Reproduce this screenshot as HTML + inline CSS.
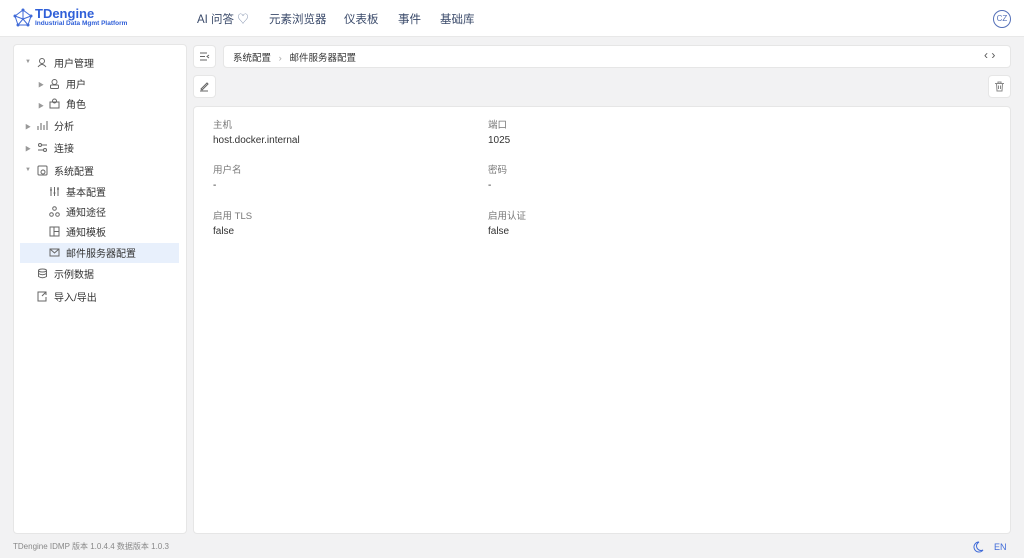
<!DOCTYPE html>
<html><head><meta charset="utf-8"><style>
*{box-sizing:border-box;margin:0;padding:0}
body{width:1024px;height:558px;background:#f2f2f3;font-family:"Liberation Sans","Noto Sans CJK SC",sans-serif;font-size:10px;color:#333;position:relative;overflow:hidden}
.abs{position:absolute}
.hdr{left:0;top:0;width:1024px;height:37px;background:#fff;border-bottom:1px solid #e8e8e8}
.nav{top:11px;font-size:11.5px;color:#3a4a6a}
.card{background:#fff;border-radius:4px;border:1px solid #e6e6e6}
.mi{position:absolute;font-size:10px;color:#333;display:flex;align-items:center}
.mi svg{margin-right:6px}
.lbl{font-size:9.5px;color:#777}
.val{font-size:10px;color:#333}
.arr{position:absolute;font-size:6px;color:#999}
</style></head><body>
<div class="abs hdr"></div>
<svg class="abs" style="left:12px;top:8px" width="22" height="20" viewBox="0 0 22 20"><g stroke="#3f6ad8" stroke-width="1" fill="none"><polygon points="11,2 19,8 16,17 6,17 3,8"/><path d="M11,2 L11,11 M19,8 L11,11 M16,17 L11,11 M6,17 L11,11 M3,8 L11,11"/></g><g fill="#3f6ad8"><circle cx="11" cy="2" r="1.5"/><circle cx="19" cy="8" r="1.5"/><circle cx="16" cy="17" r="1.5"/><circle cx="6" cy="17" r="1.5"/><circle cx="3" cy="8" r="1.5"/></g></svg>
<div class="abs" style="left:35px;top:6px;font-size:13px;font-weight:bold;color:#2f5fd8">TDengine</div>
<div class="abs" style="left:35px;top:20px;font-size:6.5px;font-weight:bold;color:#2f5fd8">Industrial Data Mgmt Platform</div>
<div class="abs nav" style="left:197px">AI 问答 <span style="color:#7a8aa8">♡</span></div>
<div class="abs nav" style="left:269px">元素浏览器</div>
<div class="abs nav" style="left:344px">仪表板</div>
<div class="abs nav" style="left:398px">事件</div>
<div class="abs nav" style="left:440px">基础库</div>
<div class="abs" style="left:993px;top:10px;width:18px;height:18px;border:1px solid #5470b8;border-radius:50%;font-size:8px;color:#5470b8;text-align:center;line-height:16px">CZ</div>

<div class="abs card" style="left:13px;top:44px;width:174px;height:490px"></div>
<div class="abs" style="left:20px;top:243px;width:159px;height:20px;background:#e8f0fc"></div>
<span class="arr" style="left:25px;top:59px">▼</span>
<div class="mi" style="left:37px;top:55px"><svg width="11" height="11"><circle cx="5" cy="4" r="2.5" fill="none" stroke="#666"/><path d="M1 10 Q5 5 9 10" fill="none" stroke="#666"/></svg>用户管理</div>
<span class="arr" style="left:38px;top:80px">▶</span>
<div class="mi" style="left:49px;top:76px"><svg width="11" height="11"><circle cx="5.5" cy="4" r="2.5" fill="none" stroke="#666"/><rect x="1.5" y="7" width="8" height="3.5" rx="1" fill="none" stroke="#666"/></svg>用户</div>
<span class="arr" style="left:38px;top:101px">▶</span>
<div class="mi" style="left:49px;top:96px"><svg width="11" height="11"><rect x="1" y="4" width="9" height="6" fill="none" stroke="#666"/><circle cx="5.5" cy="3" r="2" fill="none" stroke="#666"/></svg>角色</div>
<span class="arr" style="left:25px;top:122px">▶</span>
<div class="mi" style="left:37px;top:118px"><svg width="11" height="11"><path d="M1 10V6M4 10V3M7 10V5M10 10V1" stroke="#666"/></svg>分析</div>
<span class="arr" style="left:25px;top:144px">▶</span>
<div class="mi" style="left:37px;top:140px"><svg width="11" height="11"><path d="M1 3H10M1 8H10" stroke="#666"/><circle cx="3" cy="3" r="1.5" fill="#fff" stroke="#666"/><circle cx="8" cy="8" r="1.5" fill="#fff" stroke="#666"/></svg>连接</div>
<span class="arr" style="left:25px;top:167px">▼</span>
<div class="mi" style="left:37px;top:163px"><svg width="11" height="11"><rect x="1" y="1" width="9" height="9" rx="1" fill="none" stroke="#666"/><circle cx="6" cy="7" r="2" fill="none" stroke="#666"/></svg>系统配置</div>
<div class="mi" style="left:49px;top:184px"><svg width="11" height="11"><path d="M2 1V10M5.5 1V10M9 1V10M1 4H3M4.5 7H6.5M8 3H10" stroke="#666"/></svg>基本配置</div>
<div class="mi" style="left:49px;top:204px"><svg width="11" height="11"><circle cx="5.5" cy="2.5" r="1.8" fill="none" stroke="#666"/><circle cx="2.5" cy="8.5" r="1.8" fill="none" stroke="#666"/><circle cx="8.5" cy="8.5" r="1.8" fill="none" stroke="#666"/></svg>通知途径</div>
<div class="mi" style="left:49px;top:224px"><svg width="11" height="11"><rect x="1" y="1" width="9" height="9" fill="none" stroke="#666"/><path d="M5 1V10M5 5.5H10" stroke="#666"/></svg>通知模板</div>
<div class="mi" style="left:49px;top:245px"><svg width="11" height="11"><rect x="1" y="2" width="9" height="7" fill="none" stroke="#666"/><path d="M1 2L5.5 6L10 2" fill="none" stroke="#666"/></svg>邮件服务器配置</div>
<div class="mi" style="left:37px;top:266px"><svg width="11" height="11"><ellipse cx="5.5" cy="2.5" rx="4" ry="1.5" fill="none" stroke="#666"/><path d="M1.5 2.5V8.5Q5.5 11 9.5 8.5V2.5M1.5 5.5Q5.5 8 9.5 5.5" fill="none" stroke="#666"/></svg>示例数据</div>
<div class="mi" style="left:37px;top:289px"><svg width="11" height="11"><path d="M7 1H1V10H9V6M5 5L9 1M6 1H9V4" fill="none" stroke="#666"/></svg>导入/导出</div>

<div class="abs card" style="left:193px;top:45px;width:23px;height:23px"></div>
<svg class="abs" style="left:199px;top:51px" width="11" height="11"><path d="M1 2H8M1 5.5H6M1 9H8M10 4L8 5.5L10 7" fill="none" stroke="#666"/></svg>
<div class="abs card" style="left:223px;top:45px;width:788px;height:23px"></div>
<div class="abs" style="left:233px;top:50px;font-size:9.5px;color:#333">系统配置 <span style="color:#aaa;margin:0 5px">›</span> 邮件服务器配置</div>
<div class="abs" style="left:984px;top:48px;font-size:12px;color:#555">‹ ›</div>
<div class="abs card" style="left:193px;top:75px;width:23px;height:23px"></div>
<svg class="abs" style="left:199px;top:81px" width="11" height="11"><path d="M2 8L8 2L9 3L3 9ZM1 10H9" fill="none" stroke="#666"/></svg>
<div class="abs card" style="left:988px;top:75px;width:23px;height:23px"></div>
<svg class="abs" style="left:994px;top:81px" width="11" height="11"><path d="M1 2.5H10M4 2.5V1H7V2.5M2.5 2.5L3 10H8L8.5 2.5M4.5 4.5V8M6.5 4.5V8" fill="none" stroke="#888"/></svg>

<div class="abs card" style="left:193px;top:106px;width:818px;height:428px"></div>
<div class="abs lbl" style="left:213px;top:117px">主机</div>
<div class="abs val" style="left:213px;top:135px">host.docker.internal</div>
<div class="abs lbl" style="left:488px;top:117px">端口</div>
<div class="abs val" style="left:488px;top:135px">1025</div>
<div class="abs lbl" style="left:213px;top:162px">用户名</div>
<div class="abs val" style="left:213px;top:180px">-</div>
<div class="abs lbl" style="left:488px;top:162px">密码</div>
<div class="abs val" style="left:488px;top:180px">-</div>
<div class="abs lbl" style="left:213px;top:208px">启用 TLS</div>
<div class="abs val" style="left:213px;top:226px">false</div>
<div class="abs lbl" style="left:488px;top:208px">启用认证</div>
<div class="abs val" style="left:488px;top:226px">false</div>

<div class="abs" style="left:13px;top:541px;font-size:8px;color:#888">TDengine IDMP 版本 1.0.4.4 数据版本 1.0.3</div>
<svg class="abs" style="left:973px;top:541px" width="11" height="12"><path d="M6 1A5 5 0 1 0 10 9A4 4 0 0 1 6 1Z" fill="none" stroke="#3f6ad8"/></svg>
<div class="abs" style="left:994px;top:542px;font-size:9px;color:#3f6ad8">EN</div>
</body></html>
